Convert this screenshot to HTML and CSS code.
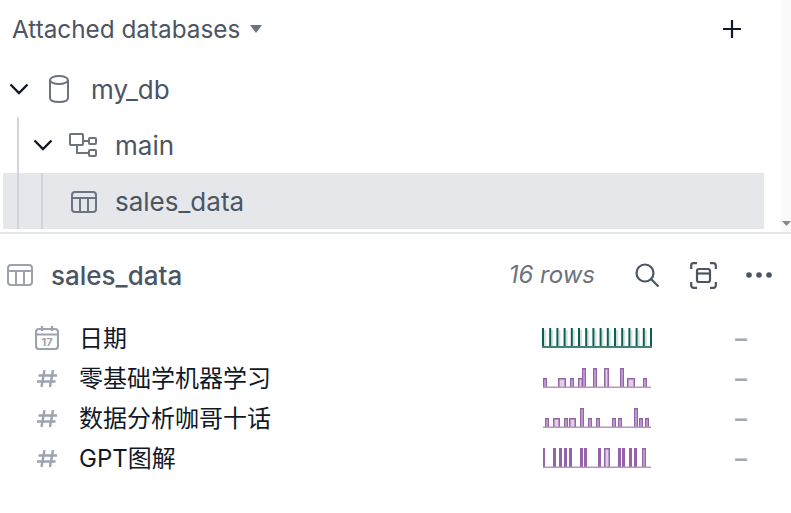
FILE: index.html
```html
<!DOCTYPE html>
<html lang="en">
<head>
<meta charset="UTF-8">
<meta name="viewport" content="width=device-width, initial-scale=1.0">
<title>Attached databases</title>
<link rel="stylesheet" href="styles.css">
</head>
<body>
<div class="top">
  <div class="tree-pane">
    <div class="tree-head">
      <span class="tree-title">Attached databases</span>
      <svg class="caret" width="12" height="8" viewBox="0 0 12 8"><path d="M0 0h12L6 8z" fill="#6b7280"/></svg>
      <svg class="plus" width="20" height="20" viewBox="0 0 20 20"><path d="M10 1v18M1 10h18" stroke="#111827" stroke-width="2.200"/></svg>
    </div>
    <div class="tree-row row-db">
      <svg class="chev" width="20" height="12" viewBox="0 0 20 12"><path d="M1.500 1.500 10 10l8.500-8.500" fill="none" stroke="#111827" stroke-width="2.400"/></svg>
      <svg class="db-icon" width="20" height="28" viewBox="0 0 20 28" fill="none" stroke="#6b7280" stroke-width="2"><ellipse cx="10" cy="5" rx="9" ry="4"/><path d="M1 5v18c0 2.500 4 4 9 4s9-1.500 9-4V5"/></svg>
      <span class="tree-label">my_db</span>
    </div>
    <div class="tree-row row-schema">
      <span class="guide"></span>
      <svg class="chev" width="20" height="12" viewBox="0 0 20 12"><path d="M1.500 1.500 10 10l8.500-8.500" fill="none" stroke="#111827" stroke-width="2.400"/></svg>
      <svg class="schema-icon" width="28" height="24" viewBox="0 0 28 24" fill="none" stroke="#6b7280" stroke-width="2"><rect x="1" y="1" width="13" height="11" rx="1"/><rect x="20" y="5" width="7" height="6" rx="1"/><rect x="20" y="17" width="7" height="6" rx="1"/><path d="M14 8h6M8 12v8h12"/></svg>
      <span class="tree-label">main</span>
    </div>
    <div class="tree-row row-table">
      <span class="guide"></span>
      <span class="guide guide-2"></span>
      <svg class="table-icon" width="26" height="22" viewBox="0 0 26 22" fill="none" stroke="#6b7280" stroke-width="2"><rect x="1" y="1" width="24" height="20" rx="3"/><path d="M1 7h24M9 7v14M17 7v14"/></svg>
      <span class="tree-label">sales_data</span>
    </div>
  </div>
  <div class="scrollbar"><svg width="9" height="5" viewBox="0 0 9 5"><path d="M0 0h9L4.500 5z" fill="#8a8a8a"/></svg></div>
</div>

<div class="detail">
  <div class="detail-head">
    <svg class="head-icon" width="26" height="22" viewBox="0 0 26 22" fill="none" stroke="#9ca3af" stroke-width="2"><rect x="1" y="1" width="24" height="20" rx="3"/><path d="M1 7h24M9 7v14M17 7v14"/></svg>
    <span class="detail-title">sales_data</span>
    <span class="row-count">16 rows</span>
    <svg class="act-search" width="24" height="24" viewBox="0 0 24 24" fill="none" stroke="#4b5563" stroke-width="2.200"><circle cx="10" cy="10" r="8.500"/><path d="M16 16l7.500 7.500"/></svg>
    <svg class="act-focus" width="27" height="27" viewBox="0 0 27 27" fill="none" stroke="#4b5563" stroke-width="2.200"><path d="M1.200 7V3.500a2.300 2.300 0 0 1 2.300-2.300H7M20 1.200h3.500a2.300 2.300 0 0 1 2.300 2.300V7M25.800 20v3.500a2.300 2.300 0 0 1-2.300 2.300H20M7 25.800H3.500a2.300 2.300 0 0 1-2.300-2.300V20"/><rect x="7" y="7" width="13" height="13" rx="2"/><path d="M7 11.500h13"/></svg>
    <svg class="act-more" width="26" height="6" viewBox="0 0 26 6" fill="#4b5563"><circle cx="3" cy="3" r="2.800"/><circle cx="13" cy="3" r="2.800"/><circle cx="23" cy="3" r="2.800"/></svg>
  </div>

  <div class="col-list">
    <div class="col-row">
      <span class="col-icon"><svg width="24" height="24" viewBox="0 0 24 24" fill="none" stroke="#9ca3af" stroke-width="2.200"><rect x="1" y="3" width="22" height="20" rx="3"/><path d="M1 8.500h22M7 0v5M17 0v5"/><text x="12" y="20" text-anchor="middle" class="cal-day">17</text></svg></span>
      <span class="col-name">日期</span>
      <span class="spark" data-color="#0f5f56" data-base="#3f8379" data-fill="#cfe2df"></span>
      <span class="col-dash">–</span>
    </div>
    <div class="col-row">
      <span class="col-icon"><svg width="20" height="17" viewBox="0 0 20 17" fill="none" stroke="#9ca3af" stroke-width="2.400"><path d="M7.500 0 4.500 17M16 0l-3 17M1.500 5.500H20M0 11.500h18.500"/></svg></span>
      <span class="col-name">零基础学机器学习</span>
      <span class="spark" data-color="#9463a8" data-base="#b794c4" data-fill="#e0cfe7" data-ranges="0,4,10;15,8,10;27,4,10;35,5,10;39,4,20;50,4,20;61,5,20;77,4,20;84,8,10;100,4,10"></span>
      <span class="col-dash">–</span>
    </div>
    <div class="col-row">
      <span class="col-icon"><svg width="20" height="17" viewBox="0 0 20 17" fill="none" stroke="#9ca3af" stroke-width="2.400"><path d="M7.500 0 4.500 17M16 0l-3 17M1.500 5.500H20M0 11.500h18.500"/></svg></span>
      <span class="col-name">数据分析咖哥十话</span>
      <span class="spark" data-color="#9463a8" data-base="#b794c4" data-fill="#e0cfe7" data-ranges="2,4,10;10,7,10;21,4,10;26,7,10;37,4,20;45,4,10;53,4,10;69,4,10;75,4,10;91,4,20;96,4,10;102,4,10"></span>
      <span class="col-dash">–</span>
    </div>
    <div class="col-row">
      <span class="col-icon"><svg width="20" height="17" viewBox="0 0 20 17" fill="none" stroke="#9ca3af" stroke-width="2.400"><path d="M7.500 0 4.500 17M16 0l-3 17M1.500 5.500H20M0 11.500h18.500"/></svg></span>
      <span class="col-name">GPT图解</span>
      <span class="spark" data-color="#9463a8" data-base="#b794c4" data-fill="#e0cfe7" data-ranges="0,2,20;10,3,20;16,3,20;21,3,20;26,3,20;37,3,20;41,3,20;55,3,20;61,6,20;75,3,20;79,3,20;86,3,20;91,3,20;99,4,20"></span>
      <span class="col-dash">–</span>
    </div>
  </div>
</div>
<script src="spark.js"></script>
</body>
</html>
```
FILE: styles.css
```css
body {
  margin: 0;
  background-color: #fff;
  font-family: Inter, "Noto Sans CJK SC", sans-serif;
  font-size: 24px;
  overflow: hidden;
}
.top {
  display: flex;
  height: 232px;
  border-bottom: 2px solid #e5e7eb;
}
.tree-pane {
  flex: 1;
  padding: 0 17px 3px 3px;
}
.tree-head {
  display: flex;
  align-items: center;
  height: 61px;
  padding: 0 22px 4px 9px;
  box-sizing: border-box;
}
.tree-title {
  color: #4b5563;
  font-size: 24.3px;
}
.caret {
  margin-left: 10px;
}
.plus {
  margin-left: auto;
}
.tree-row {
  display: flex;
  align-items: center;
  height: 56px;
  color: #4b5563;
  font-size: 26px;
}
.guide {
  align-self: stretch;
  width: 2px;
  margin-left: 14px;
  background-color: #d1d5db;
  flex: none;
}
.guide-2 {
  margin-left: 22px;
}
.row-db .chev {
  margin-left: 6px;
}
.db-icon {
  margin-left: 20px;
}
.row-db .tree-label {
  margin-left: 22px;
}
.row-schema .chev {
  margin-left: 14px;
}
.schema-icon {
  margin-left: 16px;
}
.row-schema .tree-label {
  margin-left: 18px;
}
.row-table {
  background-color: #e5e7eb;
}
.table-icon {
  margin: 2px 0 0 28px;
}
.row-table .tree-label {
  margin-left: 18px;
}
.scrollbar {
  width: 10px;
  background-color: #fafafa;
  display: flex;
  align-items: flex-end;
  justify-content: center;
  padding-bottom: 6px;
  box-sizing: border-box;
}
.detail-head {
  display: flex;
  align-items: center;
  height: 80px;
  padding: 2px 19px 0 7px;
  box-sizing: border-box;
}
.detail-title {
  margin-left: 18px;
  color: #4b5563;
  font-size: 26px;
  font-weight: 500;
}
.row-count {
  margin-left: auto;
  padding-bottom: 2px;
  color: #6b7280;
  font-style: italic;
}
.act-search {
  margin-left: 40px;
}
.act-focus {
  margin-left: 31px;
}
.act-more {
  margin-left: 29px;
}
.col-list {
  padding-top: 4px;
}
.col-row {
  display: flex;
  align-items: center;
  height: 40px;
  padding-left: 35px;
  color: #111827;
}
.col-icon {
  width: 24px;
  display: flex;
  justify-content: center;
  flex: none;
}
.cal-day {
  font-size: 11px;
  font-weight: 700;
  fill: #9ca3af;
  stroke: none;
}
.col-name {
  margin-left: 20px;
  padding-bottom: 4px;
  width: 463px;
  flex: none;
}
.spark {
  display: flex;
  width: 110px;
  height: 20px;
  flex: none;
}
.col-dash {
  margin-left: 83px;
  color: #a5abb5;
  font-weight: 600;
}
```
FILE: spark.js
```js
// draws the small column histograms from the data attributes
var NS = "http://www.w3.org/2000/svg";

function addRect(svg, x, y, w, h, fill, stroke) {
  var r = document.createElementNS(NS, "rect");
  r.setAttribute("x", x);
  r.setAttribute("y", y);
  r.setAttribute("width", w);
  r.setAttribute("height", h);
  r.setAttribute("fill", fill);
  if (stroke) {
    r.setAttribute("stroke", stroke);
    r.setAttribute("stroke-width", 1.5);
  }
  svg.appendChild(r);
}

document.querySelectorAll(".spark").forEach(function (el) {
  var svg = document.createElementNS(NS, "svg");
  svg.setAttribute("width", 110);
  svg.setAttribute("height", 20);
  var color = el.dataset.color;
  var base = el.dataset.base;
  var fill = el.dataset.fill;

  if (el.dataset.ranges) {
    el.dataset.ranges.split(";").forEach(function (item) {
      var p = item.split(",").map(Number);
      addRect(svg, p[0] + 1.75, 20.75 - p[2], p[1] - 1.5, p[2], fill, color);
    });
    addRect(svg, 1, 18.5, 108, 1.5, base);
  } else {
    // date column: one spike per bin
    for (var i = 0; i < 16; i++) {
      var x = i * 7.2;
      addRect(svg, x + 2, 2, 2, 16, fill);
      addRect(svg, x, 0, 2, 18, color);
    }
    addRect(svg, 108, 0, 1.6, 18, color);
    addRect(svg, 0, 18, 110, 2, base);
  }
  el.appendChild(svg);
});
```
